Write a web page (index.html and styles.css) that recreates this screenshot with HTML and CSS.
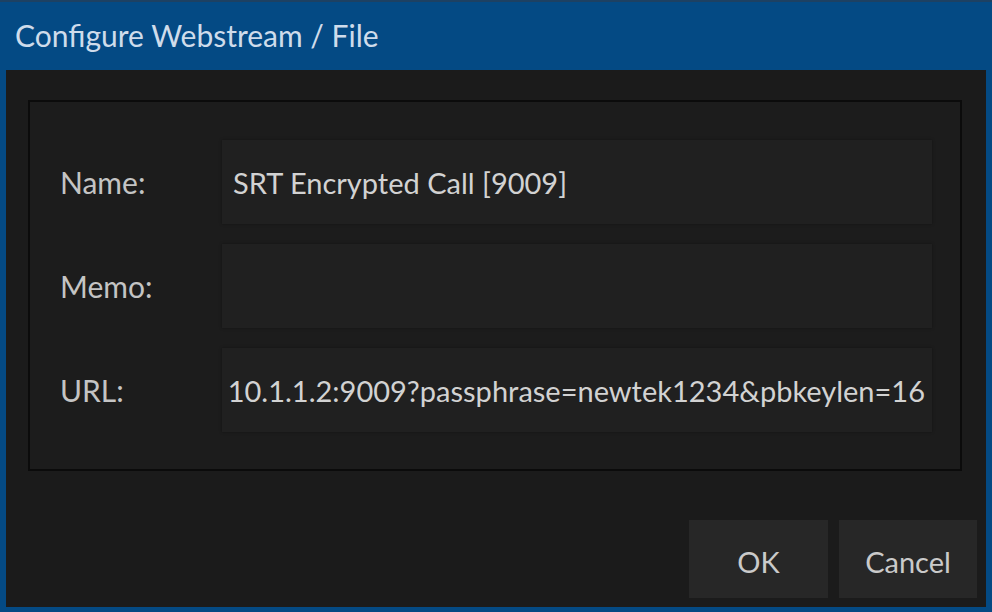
FILE: index.html
```html
<!DOCTYPE html>
<html lang="en">

<head>
    <meta charset="UTF-8">
    <title>Configure Webstream / File</title>
    <link rel="stylesheet" href="styles.css">
</head>

<body>
    <div class="dialog">
        <div class="title-bar">Configure Webstream / File</div>

        <div class="dialog-body">
            <div class="panel">
                <div class="row">
                    <div class="label">Name:</div>
                    <div class="field">
                        <span class="field-text">SRT Encrypted Call [9009]</span>
                    </div>
                </div>
                <div class="row">
                    <div class="label">Memo:</div>
                    <div class="field"></div>
                </div>
                <div class="row">
                    <div class="label">URL:</div>
                    <!-- scrolled to the end of the url -->
                    <div class="field field-scrolled">
                        <span class="field-text">10.1.1.2:9009?passphrase=newtek1234&amp;pbkeylen=16</span>
                    </div>
                </div>
            </div>

            <div class="buttons">
                <button type="button" class="btn btn-ok">OK</button>
                <button type="button" class="btn btn-cancel">Cancel</button>
            </div>
        </div>
    </div>
</body>

</html>
```

FILE: styles.css
```css
/* general */

body {
    margin: 0;
    background: #1b1b1b;
    font-family: 'Lato', 'Open Sans', sans-serif;
    overflow: hidden;
}

.dialog {
    width: 992px;
    height: 612px;
    box-sizing: border-box;
    background: #044a84;
    border-top: 2px solid #1d4163;
    padding: 0 6px 5px 6px;
    display: flex;
    flex-direction: column;
}

.title-bar {
    height: 68px;
    flex-shrink: 0;
    display: flex;
    align-items: center;
    padding-left: 9px;
    padding-bottom: 2px;
    box-sizing: border-box;
    color: #cfdceb;
    font-size: 30px;
}

.dialog-body {
    flex: 1;
    background: #1b1b1b;
    padding: 30px 24px 0 22px;
    display: flex;
    flex-direction: column;
}

/* panel with the fields */

.panel {
    height: 371px;
    box-sizing: border-box;
    border: 2px solid #0b0b0b;
    background: #1c1c1c;
    padding: 38px 28px 0 30px;
    display: flex;
    flex-direction: column;
    gap: 20px;
}

.row {
    display: flex;
    align-items: center;
    height: 84px;
}

.label {
    width: 162px;
    flex-shrink: 0;
    color: #c4c4c4;
    font-size: 30px;
}

.field {
    flex: 1;
    height: 100%;
    background: #202020;
    box-shadow: 0 0 3px rgba(0, 0, 0, 0.35);
    display: flex;
    align-items: center;
    padding: 0 7px 0 11px;
    overflow: hidden;
    white-space: nowrap;
}

.field-scrolled {
    justify-content: flex-end;
    padding-left: 4px;
}

.field-text {
    color: #d2d2d2;
    font-size: 29px;
}

/* buttons */

.buttons {
    display: flex;
    justify-content: flex-end;
    gap: 11px;
    margin-top: 49px;
    margin-right: -15px;
}

.btn {
    height: 78px;
    border: none;
    background: #272727;
    color: #cacaca;
    font-family: inherit;
    font-size: 29px;
    padding: 4px 0 0 0;
    cursor: pointer;
}

.btn-ok {
    width: 139px;
}

.btn-cancel {
    width: 138px;
}
```
